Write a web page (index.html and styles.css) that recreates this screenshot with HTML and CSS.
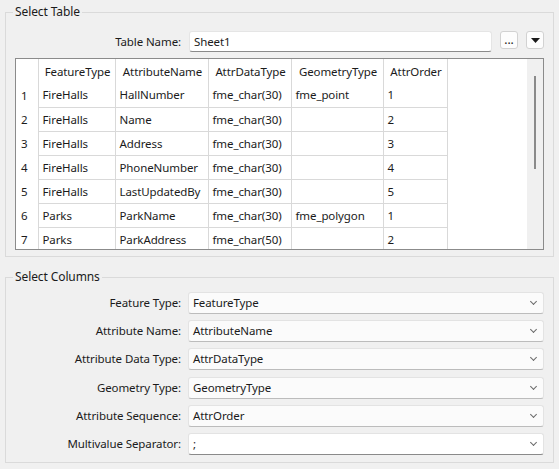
FILE: index.html
```html
<!DOCTYPE html>
<html lang="en">
<head>
  <meta charset="UTF-8" />
  <title>Select Table</title>
  <link rel="stylesheet" href="styles.css">
</head>
<body>

  <div class="dialog">

    <section class="group group-table">
      <span class="group-title">Select Table</span>

      <div class="name-row">
        <label class="field-label" for="tableName">Table Name:</label>
        <div class="text-input" id="tableName">Sheet1</div>
        <button class="tool-btn dots">...</button>
        <button class="tool-btn">
          <svg width="9" height="5" viewBox="0 0 9 5"><path d="M0 0h9L4.5 5z" fill="#1a1a1a"/></svg>
        </button>
      </div>

      <div class="table-frame">
        <div class="table-view">
          <table class="grid">
            <thead>
              <tr>
                <th class="num"></th>
                <th class="c1">FeatureType</th>
                <th class="c2">AttributeName</th>
                <th class="c3">AttrDataType</th>
                <th class="c4">GeometryType</th>
                <th class="c5">AttrOrder</th>
              </tr>
            </thead>
            <tbody>
              <tr><td class="num">1</td><td>FireHalls</td><td>HallNumber</td><td>fme_char(30)</td><td>fme_point</td><td>1</td></tr>
              <tr><td class="num">2</td><td>FireHalls</td><td>Name</td><td>fme_char(30)</td><td></td><td>2</td></tr>
              <tr><td class="num">3</td><td>FireHalls</td><td>Address</td><td>fme_char(30)</td><td></td><td>3</td></tr>
              <tr><td class="num">4</td><td>FireHalls</td><td>PhoneNumber</td><td>fme_char(30)</td><td></td><td>4</td></tr>
              <tr><td class="num">5</td><td>FireHalls</td><td>LastUpdatedBy</td><td>fme_char(30)</td><td></td><td>5</td></tr>
              <tr><td class="num">6</td><td>Parks</td><td>ParkName</td><td>fme_char(30)</td><td>fme_polygon</td><td>1</td></tr>
              <tr><td class="num">7</td><td>Parks</td><td>ParkAddress</td><td>fme_char(50)</td><td></td><td>2</td></tr>
            </tbody>
          </table>
        </div>
        <div class="vscroll"><div class="thumb"></div></div>
      </div>
    </section>

    <section class="group group-columns">
      <span class="group-title">Select Columns</span>

      <div class="form-grid">
        <label class="field-label">Feature Type:</label>
        <div class="combo">FeatureType<span class="chevron"></span></div>

        <label class="field-label">Attribute Name:</label>
        <div class="combo">AttributeName<span class="chevron"></span></div>

        <label class="field-label">Attribute Data Type:</label>
        <div class="combo">AttrDataType<span class="chevron"></span></div>

        <label class="field-label">Geometry Type:</label>
        <div class="combo">GeometryType<span class="chevron"></span></div>

        <label class="field-label">Attribute Sequence:</label>
        <div class="combo">AttrOrder<span class="chevron"></span></div>

        <label class="field-label">Multivalue Separator:</label>
        <div class="combo editable">;<span class="chevron"></span></div>
      </div>
    </section>

  </div>

</body>
</html>
```

FILE: styles.css
```css
body {
  margin: 0;
  background: #f0f0f0;
  font-family: "Segoe UI", "Noto Sans", sans-serif;
  font-size: 11.5px;
  letter-spacing: -0.1px;
  color: #1b1b1b;
}

.dialog {
  padding: 12px 0 0 5px;
  width: 549px;
}

.group {
  position: relative;
  border: 1px solid #dadada;
}

.group-title {
  position: absolute;
  top: -9px;
  left: 7px;
  padding: 0 2px;
  line-height: 16px;
  font-size: 12px;
  background: #f0f0f0;
}

.field-label {
  text-align: right;
  line-height: 22px;
  white-space: nowrap;
}

/* --- Select Table --- */

.group-table {
  height: 245px;
  padding: 18px 0 0 9px;
  box-sizing: border-box;
}

.name-row {
  display: flex;
  align-items: flex-start;
  height: 21px;
}

.name-row .field-label {
  width: 166px;
  line-height: 21px;
}

.text-input {
  margin-left: 8px;
  width: 297px;
  height: 19px;
  line-height: 19px;
  padding: 0 0 0 4px;
  background: #fff;
  border: 1px solid #e5e5e5;
  border-bottom-color: #8a8a8a;
  border-radius: 3px;
}

.tool-btn {
  margin-left: 8px;
  width: 18px;
  height: 18px;
  padding: 0;
  display: flex;
  align-items: center;
  justify-content: center;
  background: #fdfdfd;
  border: 1px solid #d2d2d2;
  border-radius: 3px;
  font-family: inherit;
  font-size: 12px;
  color: #1b1b1b;
}

.tool-btn.dots {
  align-items: flex-end;
  line-height: 12px;
  padding-bottom: 2px;
}

.table-frame {
  display: flex;
  margin-top: 6px;
  width: 527px;
  height: 190px;
  border: 1px solid #8b8b8b;
  background: #fff;
  overflow: hidden;
}

.table-view {
  flex: 1;
  overflow: hidden;
}

.grid {
  border-collapse: collapse;
  table-layout: fixed;
}

.grid th,
.grid td {
  padding: 0 0 0 4px;
  height: 24px;
  box-sizing: border-box;
  border-right: 1px solid #d9d9d9;
  white-space: nowrap;
  overflow: hidden;
  font-weight: normal;
  text-align: left;
}

.grid td {
  border-bottom: 1px solid #d9d9d9;
}

.grid th {
  text-align: center;
  padding: 0 0 0 2px;
}

.grid .num {
  width: 22px;
  padding-left: 5px;
  border-bottom: none;
}

.grid .c1 { width: 77px; }
.grid .c2 { width: 93px; }
.grid .c3 { width: 83px; }
.grid .c4 { width: 92px; }
.grid .c5 { width: 64px; }

.vscroll {
  width: 16px;
  background: #f0f0f0;
  padding-top: 17px;
}

.thumb {
  margin-left: 7px;
  width: 2px;
  height: 93px;
  background: #8a8a8a;
}

/* --- Select Columns --- */

.group-columns {
  margin-top: 20px;
  height: 186px;
  box-sizing: border-box;
  padding: 14px 9px 0 0;
}

.form-grid {
  display: grid;
  grid-template-columns: 175px 1fr;
  column-gap: 7px;
  row-gap: 6.2px;
}

.combo {
  position: relative;
  height: 22px;
  box-sizing: border-box;
  line-height: 20px;
  padding-left: 4px;
  background: #fbfbfb;
  border: 1px solid #e3e3e3;
  border-bottom-color: #bcbcbc;
  border-radius: 3px;
}

.combo.editable {
  background: #fff;
  border-bottom-color: #8a8a8a;
}

.chevron {
  position: absolute;
  right: 7px;
  top: 6px;
  width: 4px;
  height: 4px;
  border-right: 1px solid #6a6a6a;
  border-bottom: 1px solid #6a6a6a;
  transform: rotate(45deg);
}
```
